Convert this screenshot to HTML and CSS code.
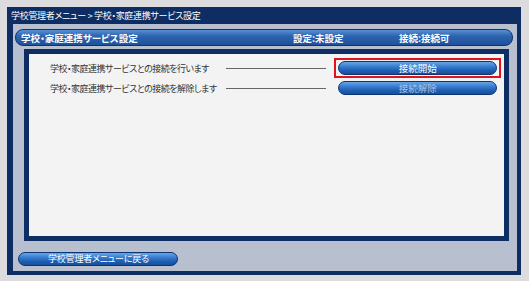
FILE: index.html
```html
<!DOCTYPE html>
<html lang="ja">
<head>
<meta charset="utf-8">
<title>学校・家庭連携サービス設定</title>
<link rel="stylesheet" href="styles.css">
</head>
<body>
<div class="frame">
  <div class="titlebar">学校管理者メニュー &gt; 学校・家庭連携サービス設定</div>
  <div class="header pill">
    <span class="h-title">学校・家庭連携サービス設定</span>
    <span class="h-stat">設定:未設定</span>
    <span class="h-stat">接続:接続可</span>
  </div>
  <div class="content">
    <div class="row">
      <span class="label">学校・家庭連携サービスとの接続を行います</span>
      <span class="rule"></span>
      <div class="btnwrap selected"><button class="pill btn">接続開始</button></div>
    </div>
    <div class="row">
      <span class="label">学校・家庭連携サービスとの接続を解除します</span>
      <span class="rule"></span>
      <div class="btnwrap"><button class="pill btn disabled">接続解除</button></div>
    </div>
  </div>
  <div class="footer">
    <button class="pill back">学校管理者メニューに戻る</button>
  </div>
</div>
</body>
</html>
```
FILE: styles.css
```css
* { box-sizing: border-box; }
html, body { margin: 0; padding: 0; }
body {
  background: #dcdcde;
  padding: 7px 8px 6px 7px;
  font-family: "Noto Sans CJK JP", "Noto Sans", sans-serif;
  font-feature-settings: "palt";
}
.frame {
  width: 514px;
  height: 268px;
  background: #b8bfcf;
  border-left: 6px solid #0d2d63;
  border-right: 4px solid #0d2d63;
  border-bottom: 4px solid #0d2d63;
  display: flex;
  flex-direction: column;
}
.titlebar {
  background: #0d2d63;
  height: 17px;
  color: #fff;
  font-size: 9px;
  letter-spacing: -0.3px;
  line-height: 17px;
  margin-left: -2px;
  white-space: pre;
}
.pill {
  border: 1px solid #0b3472;
  border-radius: 8px;
  background: linear-gradient(#6aa6e6 0%, #3a7fd0 35%, #1f5eb2 70%, #184f9a 100%);
  color: #fff;
  font-family: inherit;
  font-feature-settings: "palt";
  padding: 0;
}
.header {
  margin: 5px 4px 0 2px;
  height: 17px;
  display: grid;
  grid-template-columns: 272px 106px 1fr;
  align-items: center;
  padding-left: 5px;
  font-size: 9.5px;
  font-weight: bold;
  background: linear-gradient(#5a90d4 0%, #2c64b0 40%, #1f519a 100%);
  white-space: nowrap;
}
.content {
  margin: 3px 8px 0 11px;
  height: 192px;
  border: 5px solid #0d2d63;
  background: #f3f3f4;
  padding: 4px 3px 0 21px;
  display: flex;
  flex-direction: column;
}
.row {
  display: flex;
  align-items: center;
  height: 20px;
}
.label {
  font-size: 9px;
  letter-spacing: -0.5px;
  color: #333;
  width: 176px;
  white-space: nowrap;
}
.rule {
  width: 101px;
  height: 1px;
  background: #666;
  margin-right: 8px;
}
.btnwrap {
  width: 167px;
  height: 20px;
  border: 2px solid transparent;
  padding: 1px 2px;
}
.btnwrap.selected { border-color: #e0141c; }
.btn {
  display: block;
  width: 100%;
  height: 14px;
  font-size: 9.5px;
  line-height: 12px;
  border-radius: 7px;
}
.btn.disabled { color: #a9c3e4; }
.footer {
  margin-top: 11px;
  padding-left: 5px;
}
.back {
  display: block;
  width: 160px;
  height: 14px;
  font-size: 9px;
  letter-spacing: -0.2px;
  line-height: 12px;
  border-radius: 7px;
  text-align: left;
  padding-left: 29px;
}
```
